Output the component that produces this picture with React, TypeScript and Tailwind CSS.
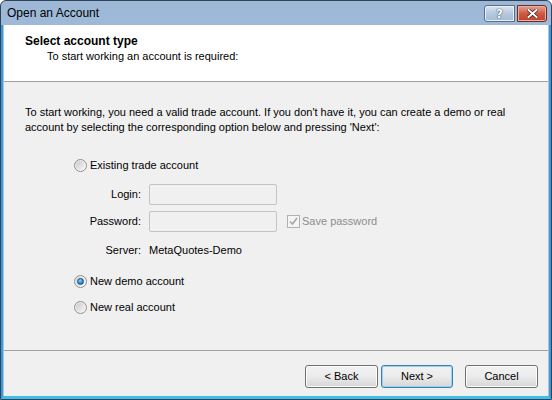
import React from "react";

const font = "font-['Tahoma','Liberation_Sans',sans-serif]";

const Radio: React.FC<{ checked?: boolean }> = ({ checked = false }) => (
  <span className="relative inline-flex h-[13px] w-[13px] shrink-0 items-center justify-center rounded-full border border-[#8e8f8f] bg-gradient-to-br from-[#e6e6e6] to-[#fbfbfb]">
    <span className="h-[9px] w-[9px] rounded-full bg-gradient-to-br from-[#cbcbcb] to-[#f6f6f6]" />
    {checked && (
      <span className="absolute h-[7px] w-[7px] rounded-full border border-[#1c5b8a] bg-[radial-gradient(circle_at_40%_35%,#8fd3ff,#1b6fb8_70%)]" />
    )}
  </span>
);

const WinButton: React.FC<{ label: string; focused?: boolean }> = ({
  label,
  focused = false,
}) => (
  <button
    className={
      focused
        ? "flex h-[23px] w-[72px] items-center justify-center rounded-[3px] border border-[#3c7fb1] bg-gradient-to-b from-[#f2f2f2] via-[#ebebeb] to-[#d6d6d6] text-[11px] text-black shadow-[inset_0_0_0_1px_#9ad3f2]"
        : "flex h-[23px] w-[73px] items-center justify-center rounded-[3px] border border-[#707070] bg-gradient-to-b from-[#f2f2f2] via-[#ebebeb] to-[#d6d6d6] text-[11px] text-black shadow-[inset_0_0_0_1px_#fcfcfc]"
    }
  >
    {label}
  </button>
);

export default function App() {
  return (
    <div className={`h-[400px] w-[552px] overflow-hidden ${font}`}>
      <div className="flex h-full w-full flex-col rounded-t-[6px] border border-[#2f4258] bg-gradient-to-b from-[#9cb8d6] to-[#bbd3ec]">
        {/* title bar */}
        <div className="flex h-[24px] shrink-0 items-center justify-between pl-[6px] pr-[4px]">
          <span className="font-['Liberation_Sans',sans-serif] text-[12px] text-black">
            Open an Account
          </span>
          <div className="flex items-center gap-[2px] pt-[1px]">
            <div className="flex h-[17px] w-[31px] items-center justify-center rounded-l-[3px] border border-[#5b6f87] bg-gradient-to-b from-[#dbe6f2] via-[#b5c8de] to-[#a4bcd6] shadow-[inset_0_0_0_1px_#e9f0f8]">
              <span className="font-['DejaVu_Sans',sans-serif] text-[12px] font-bold leading-none text-white [text-shadow:0_0_1px_#2c3e55,0_0_1px_#2c3e55]">
                ?
              </span>
            </div>
            <div className="flex h-[17px] w-[30px] items-center justify-center rounded-r-[3px] border border-[#6b2a23] bg-gradient-to-b from-[#e8a190] via-[#cf5a44] to-[#c2402a] shadow-[inset_0_0_0_1px_#eab0a2]">
              <svg width="11" height="9" viewBox="0 0 11 9">
                <path
                  d="M1.5 1 L9.5 8 M9.5 1 L1.5 8"
                  stroke="#4a1a14"
                  strokeWidth="3.4"
                  strokeLinecap="square"
                />
                <path
                  d="M1.5 1 L9.5 8 M9.5 1 L1.5 8"
                  stroke="#ffffff"
                  strokeWidth="2"
                  strokeLinecap="square"
                />
              </svg>
            </div>
          </div>
        </div>

        {/* client area */}
        <div className="flex flex-1 flex-col border-x-[2px] border-b-[3px] border-[#3d9ad8] border-b-[#41bde6]">
          <div className="flex flex-1 flex-col border-l border-r border-[#a9c7e3] bg-[#f0f0f0] text-[11px] text-black">
            {/* header */}
            <div className="h-[57px] shrink-0 border-b border-[#a0a0a0] bg-white pl-[21px] pt-[9px]">
              <div className="text-[12px] font-bold leading-[15px]">
                Select account type
              </div>
              <div className="pl-[22px] leading-[15px]">
                To start working an account is required:
              </div>
            </div>

            {/* body */}
            <div className="flex flex-1 flex-col px-[21px] pt-[23px]">
              <p className="leading-[15px]">
                To start working, you need a valid trade account. If you don't
                have it, you can create a demo or real account by selecting the
                corresponding option below and pressing 'Next':
              </p>

              <div className="mt-[23px] flex flex-col pl-[49px]">
                <label className="flex h-[15px] items-center gap-[3px]">
                  <Radio />
                  <span>Existing trade account</span>
                </label>

                <div className="mt-[11px] grid grid-cols-[67px_auto] items-center gap-x-[8px] gap-y-[6px]">
                  <span className="text-right">Login:</span>
                  <div className="h-[21px] w-[128px] rounded-[2px] border border-[#c4c4c4] bg-[#f0f0f0]" />
                  <span className="text-right">Password:</span>
                  <div className="flex items-center gap-[10px]">
                    <div className="h-[21px] w-[128px] rounded-[2px] border border-[#c4c4c4] bg-[#f0f0f0]" />
                    <label className="flex items-center gap-[2px] text-[#8d8d8d]">
                      <span className="flex h-[13px] w-[13px] items-center justify-center border border-[#b1b1b1] bg-[#f4f4f4]">
                        <svg width="9" height="9" viewBox="0 0 9 9">
                          <path
                            d="M1 4.5 L3.5 7 L8 1"
                            fill="none"
                            stroke="#a8a8a8"
                            strokeWidth="1.6"
                          />
                        </svg>
                      </span>
                      <span>Save password</span>
                    </label>
                  </div>
                  <span className="mt-[4px] text-right">Server:</span>
                  <span className="mt-[4px]">MetaQuotes-Demo</span>
                </div>

                <label className="mt-[15px] flex h-[15px] items-center gap-[3px]">
                  <Radio checked />
                  <span>New demo account</span>
                </label>
                <label className="mt-[11px] flex h-[15px] items-center gap-[3px]">
                  <Radio />
                  <span>New real account</span>
                </label>
              </div>
            </div>

            {/* footer */}
            <div className="h-[46px] shrink-0 border-t border-[#a0a0a0] pt-[14px]">
              <div className="flex justify-end pr-[10px]">
                <div className="flex gap-[3px]">
                  <WinButton label="< Back" />
                  <WinButton label="Next >" focused />
                </div>
                <div className="ml-[12px]">
                  <WinButton label="Cancel" />
                </div>
              </div>
            </div>
          </div>
        </div>
      </div>
    </div>
  );
}
